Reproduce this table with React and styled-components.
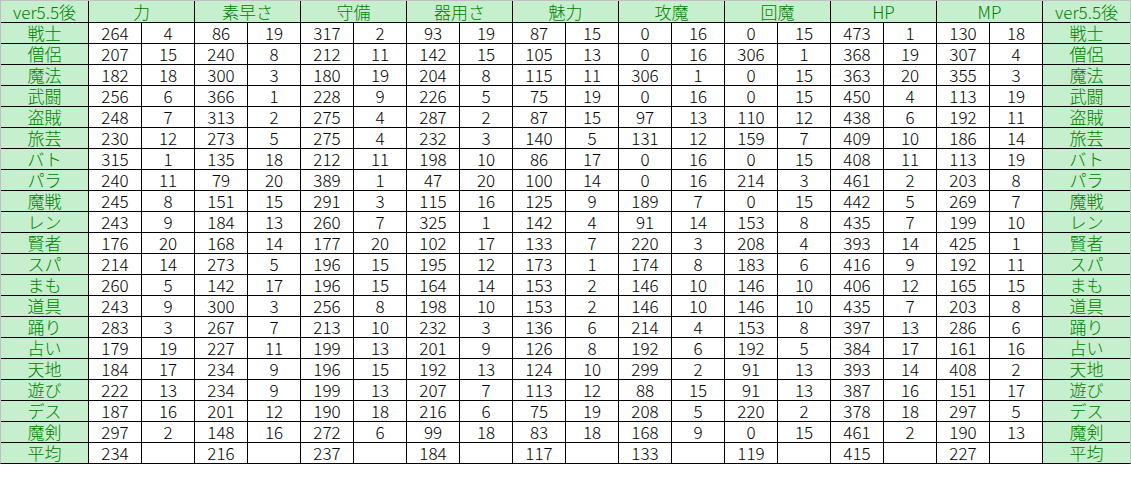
import React from "react";
import styled, { createGlobalStyle } from "styled-components";

const GlobalStyle = createGlobalStyle`
    html, body {
        margin: 0;
        padding: 0;
        background: #ffffff;
    }
`;

const Sheet = styled.div`
    background: #000000;
    border-bottom: 1px solid #000000;
    border-left: 1px solid #c0c0c0;
    border-right: 1px solid #c0c0c0;
    border-top: 1px solid #c0c0c0;
    display: grid;
    gap: 1px;
    grid-auto-rows: 20px;
    grid-template-columns: 87px repeat(18, 52px) 87px;
    grid-template-rows: 21px;
    width: fit-content;
`;

const Cell = styled.div`
    font-family: "Noto Sans CJK JP", "DejaVu Sans", sans-serif;
    font-weight: 300;
    line-height: 20px;
    text-align: center;
    white-space: nowrap;
`;

const GreenCell = styled(Cell)`
    background: #c6efce;
    color: #008000;
    font-size: 17px;
`;

const HeadCell = styled(GreenCell)`
    grid-column: span ${p => p.span || 1};
    line-height: 21px;
`;

const NumCell = styled(Cell)`
    background: #ffffff;
    color: #000000;
    font-size: 17px;
`;

const stats = ["力", "素早さ", "守備", "器用さ", "魅力", "攻魔", "回魔", "HP", "MP"];

const rows = [
    ["戦士", 264, 4, 86, 19, 317, 2, 93, 19, 87, 15, 0, 16, 0, 15, 473, 1, 130, 18],
    ["僧侶", 207, 15, 240, 8, 212, 11, 142, 15, 105, 13, 0, 16, 306, 1, 368, 19, 307, 4],
    ["魔法", 182, 18, 300, 3, 180, 19, 204, 8, 115, 11, 306, 1, 0, 15, 363, 20, 355, 3],
    ["武闘", 256, 6, 366, 1, 228, 9, 226, 5, 75, 19, 0, 16, 0, 15, 450, 4, 113, 19],
    ["盗賊", 248, 7, 313, 2, 275, 4, 287, 2, 87, 15, 97, 13, 110, 12, 438, 6, 192, 11],
    ["旅芸", 230, 12, 273, 5, 275, 4, 232, 3, 140, 5, 131, 12, 159, 7, 409, 10, 186, 14],
    ["バト", 315, 1, 135, 18, 212, 11, 198, 10, 86, 17, 0, 16, 0, 15, 408, 11, 113, 19],
    ["パラ", 240, 11, 79, 20, 389, 1, 47, 20, 100, 14, 0, 16, 214, 3, 461, 2, 203, 8],
    ["魔戦", 245, 8, 151, 15, 291, 3, 115, 16, 125, 9, 189, 7, 0, 15, 442, 5, 269, 7],
    ["レン", 243, 9, 184, 13, 260, 7, 325, 1, 142, 4, 91, 14, 153, 8, 435, 7, 199, 10],
    ["賢者", 176, 20, 168, 14, 177, 20, 102, 17, 133, 7, 220, 3, 208, 4, 393, 14, 425, 1],
    ["スパ", 214, 14, 273, 5, 196, 15, 195, 12, 173, 1, 174, 8, 183, 6, 416, 9, 192, 11],
    ["まも", 260, 5, 142, 17, 196, 15, 164, 14, 153, 2, 146, 10, 146, 10, 406, 12, 165, 15],
    ["道具", 243, 9, 300, 3, 256, 8, 198, 10, 153, 2, 146, 10, 146, 10, 435, 7, 203, 8],
    ["踊り", 283, 3, 267, 7, 213, 10, 232, 3, 136, 6, 214, 4, 153, 8, 397, 13, 286, 6],
    ["占い", 179, 19, 227, 11, 199, 13, 201, 9, 126, 8, 192, 6, 192, 5, 384, 17, 161, 16],
    ["天地", 184, 17, 234, 9, 196, 15, 192, 13, 124, 10, 299, 2, 91, 13, 393, 14, 408, 2],
    ["遊び", 222, 13, 234, 9, 199, 13, 207, 7, 113, 12, 88, 15, 91, 13, 387, 16, 151, 17],
    ["デス", 187, 16, 201, 12, 190, 18, 216, 6, 75, 19, 208, 5, 220, 2, 378, 18, 297, 5],
    ["魔剣", 297, 2, 148, 16, 272, 6, 99, 18, 83, 18, 168, 9, 0, 15, 461, 2, 190, 13],
    ["平均", 234, "", 216, "", 237, "", 184, "", 117, "", 133, "", 119, "", 415, "", 227, ""],
];

export default function App() {
    return (
        <>
            <GlobalStyle />
            <Sheet>
                <HeadCell>ver5.5後</HeadCell>
                {stats.map(s => (
                    <HeadCell key={s} span={2}>
                        {s}
                    </HeadCell>
                ))}
                <HeadCell>ver5.5後</HeadCell>
                {rows.map(([name, ...values]) => (
                    <React.Fragment key={name}>
                        <GreenCell>{name}</GreenCell>
                        {values.map((v, i) => (
                            <NumCell key={i}>{v}</NumCell>
                        ))}
                        <GreenCell>{name}</GreenCell>
                    </React.Fragment>
                ))}
            </Sheet>
        </>
    );
}
